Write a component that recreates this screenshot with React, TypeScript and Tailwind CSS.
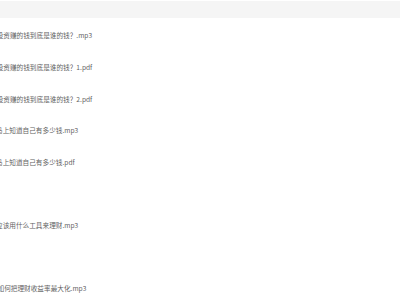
import React from 'react';

type Row = { pre: string; name: string; shift: string } | null;

const rows: Row[] = [
  { pre: '你投', name: '资赚的钱到底是谁的钱？.mp3', shift: 'ml-[-10px]' },
  { pre: '你投', name: '资赚的钱到底是谁的钱？1.pdf', shift: 'ml-[-10px]' },
  { pre: '你投', name: '资赚的钱到底是谁的钱？2.pdf', shift: 'ml-[-10px]' },
  { pre: '马', name: '上知道自己有多少钱.mp3', shift: 'ml-[-4px]' },
  { pre: '马', name: '上知道自己有多少钱.pdf', shift: 'ml-[-4px]' },
  null,
  { pre: '应', name: '该用什么工具来理财.mp3', shift: 'ml-[-4px]' },
  null,
  { pre: '如', name: '何把理财收益率最大化.mp3', shift: 'ml-[-2.5px]' },
];

export default function App() {
  return (
    <div
      className="w-[400px] h-[300px] overflow-hidden bg-white"
      style={{ fontFamily: '"Noto Sans CJK SC", "Liberation Sans", sans-serif' }}
    >
      <div className="mt-px h-[17px] bg-[#f5f5f5]" />
      <div className="pt-[2px]">
        {rows.map((r, i) => (
          <div key={i} className="h-[31.6px] flex items-center overflow-hidden">
            {r && (
              <span className={`${r.shift} whitespace-nowrap text-[6.65px] leading-none text-[#5f5f5f]`}>
                {r.pre}
                {r.name}
              </span>
            )}
          </div>
        ))}
      </div>
    </div>
  );
}
